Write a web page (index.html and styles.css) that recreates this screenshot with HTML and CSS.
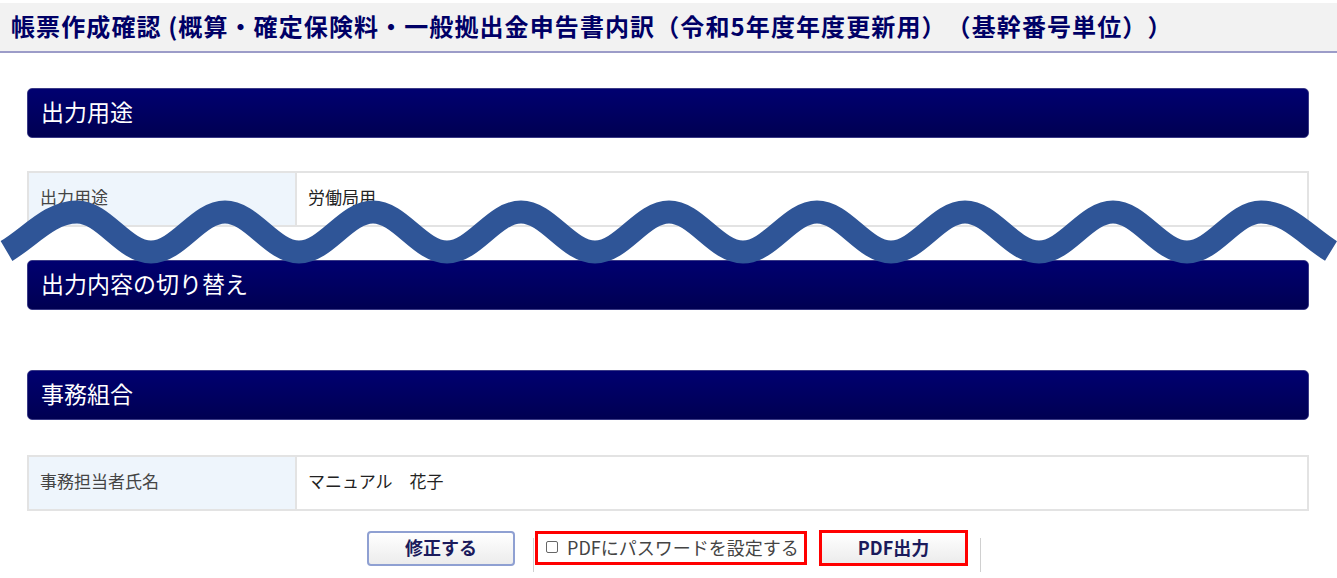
FILE: index.html
```html
<!DOCTYPE html>
<html lang="ja">
<head>
<meta charset="utf-8">
<title>帳票作成確認</title>
<link rel="stylesheet" href="styles.css">
</head>
<body>
<header class="page-header">
  <h1 class="page-title">帳票作成確認 (概算・確定保険料・一般拠出金申告書内訳（令和5年度年度更新用）（基幹番号単位））</h1>
</header>
<main class="content">
  <section class="block">
    <h2 class="section-title">出力用途</h2>
    <table class="info-table">
      <tr><th>出力用途</th><td>労働局用</td></tr>
    </table>
  </section>
  <section class="block block-empty">
    <h2 class="section-title">出力内容の切り替え</h2>
  </section>
  <section class="block block-last">
    <h2 class="section-title">事務組合</h2>
    <table class="info-table">
      <tr><th>事務担当者氏名</th><td>マニュアル　花子</td></tr>
    </table>
  </section>
  <div class="actions">
    <button class="btn btn-edit" type="button">修正する</button>
    <span class="sep sep-left"></span>
    <label class="pw-option"><input type="checkbox" class="check">PDFにパスワードを設定する</label>
    <button class="btn btn-pdf" type="button">PDF出力</button>
    <span class="sep sep-right"></span>
  </div>
</main>
<svg class="wave" width="1337" height="578" viewBox="0 0 1337 578" aria-hidden="true">
  <path d="M6.5 251 C30 237 50 212 77 212 C104 212 124 252 151 252 C178 252 198 212 225 212 C252 212 272 252 299 252 C326 252 346 212 373 212 C400 212 420 252 447 252 C474 252 494 212 521 212 C548 212 568 252 595 252 C622 252 642 212 669 212 C696 212 716 252 743 252 C770 252 790 212 817 212 C844 212 864 252 891 252 C918 252 938 212 965 212 C992 212 1012 252 1039 252 C1066 252 1086 212 1113 212 C1140 212 1160 252 1187 252 C1214 252 1234 212 1261 212 C1288 212 1308 237 1331 251" fill="none" stroke="#2f5597" stroke-width="23"/>
</svg>
</body>
</html>
```
FILE: styles.css
```css
html, body {
  margin: 0;
  padding: 0;
  background: #ffffff;
}
body {
  font-family: "Noto Sans CJK JP", "Noto Sans", sans-serif;
  color: #333;
  width: 1337px;
  height: 578px;
  overflow: hidden;
  position: relative;
  text-spacing-trim: space-all;
}
.page-header {
  margin-top: 3px;
  height: 50px;
  background: #f2f2f2;
  border-bottom: 2px solid #9c9cc8;
  display: flex;
  align-items: center;
  padding-left: 11px;
  box-sizing: border-box;
  padding-bottom: 2px;
}
.page-title {
  margin: 0;
  font-size: 24px;
  font-weight: 700;
  color: #000066;
  white-space: nowrap;
  letter-spacing: 1.1px;
  line-height: 1;
}
.content {
  padding: 35px 28px 0 27px;
}
.block {
  margin-bottom: 33px;
}
.block-empty {
  margin-bottom: 60px;
}
.block-last {
  margin-bottom: 19px;
}
.section-title {
  margin: 0 0 33px;
  height: 50px;
  box-sizing: border-box;
  background: linear-gradient(#000070, #000052);
  border: 1px solid #3a3a86;
  border-radius: 5px;
  color: #ffffff;
  font-size: 23px;
  font-weight: 400;
  line-height: 1;
  display: flex;
  align-items: center;
  padding-left: 13px;
  padding-bottom: 4px;
}
.block-empty .section-title {
  margin-bottom: 0;
}
.block-last .section-title {
  margin-bottom: 35px;
}
.info-table {
  width: 100%;
  border-collapse: collapse;
  border: 2px solid #e3e3e3;
}
.info-table th,
.info-table td {
  height: 54px;
  box-sizing: border-box;
  padding: 0 11px 5px;
  font-size: 17px;
  font-weight: 400;
  text-align: left;
  border: 2px solid #e3e3e3;
}
.info-table th {
  width: 268px;
  background: #eef5fc;
  color: #444;
}
.info-table td {
  color: #222;
}
.actions {
  display: flex;
  align-items: center;
  justify-content: center;
  padding-left: 12px;
}
.btn {
  font-family: "Noto Sans CJK JP", "Noto Sans", sans-serif;
  font-size: 18px;
  font-weight: 700;
  color: #1b1b5c;
  background: linear-gradient(#ffffff, #ececec);
  cursor: pointer;
  padding: 0 0 2px;
}
.btn-edit {
  width: 148px;
  height: 35px;
  border: 2px solid #8fa0d2;
  border-radius: 4px;
  margin-right: 18px;
}
.sep {
  width: 1px;
  height: 34px;
  background: #d0d0d0;
  align-self: flex-end;
  margin-bottom: -6px;
}
.sep-left {
  margin-right: 1px;
}
.pw-option {
  width: 272px;
  display: flex;
  align-items: center;
  gap: 9px;
  height: 34px;
  box-sizing: border-box;
  border: 3px solid #ff0000;
  padding: 0 0 2px 8px;
  font-size: 18px;
  color: #444;
  margin-right: 12px;
  white-space: nowrap;
}
.check {
  appearance: none;
  -webkit-appearance: none;
  width: 12px;
  height: 12px;
  margin: 0;
  border: 1px solid #666;
  border-radius: 2px;
  background: #fff;
  flex: none;
}
.btn-pdf {
  width: 149px;
  height: 36px;
  border: 3px solid #ff0000;
  border-radius: 0;
  margin-right: 12px;
}
.wave {
  position: absolute;
  left: 0;
  top: 0;
  pointer-events: none;
}
```
